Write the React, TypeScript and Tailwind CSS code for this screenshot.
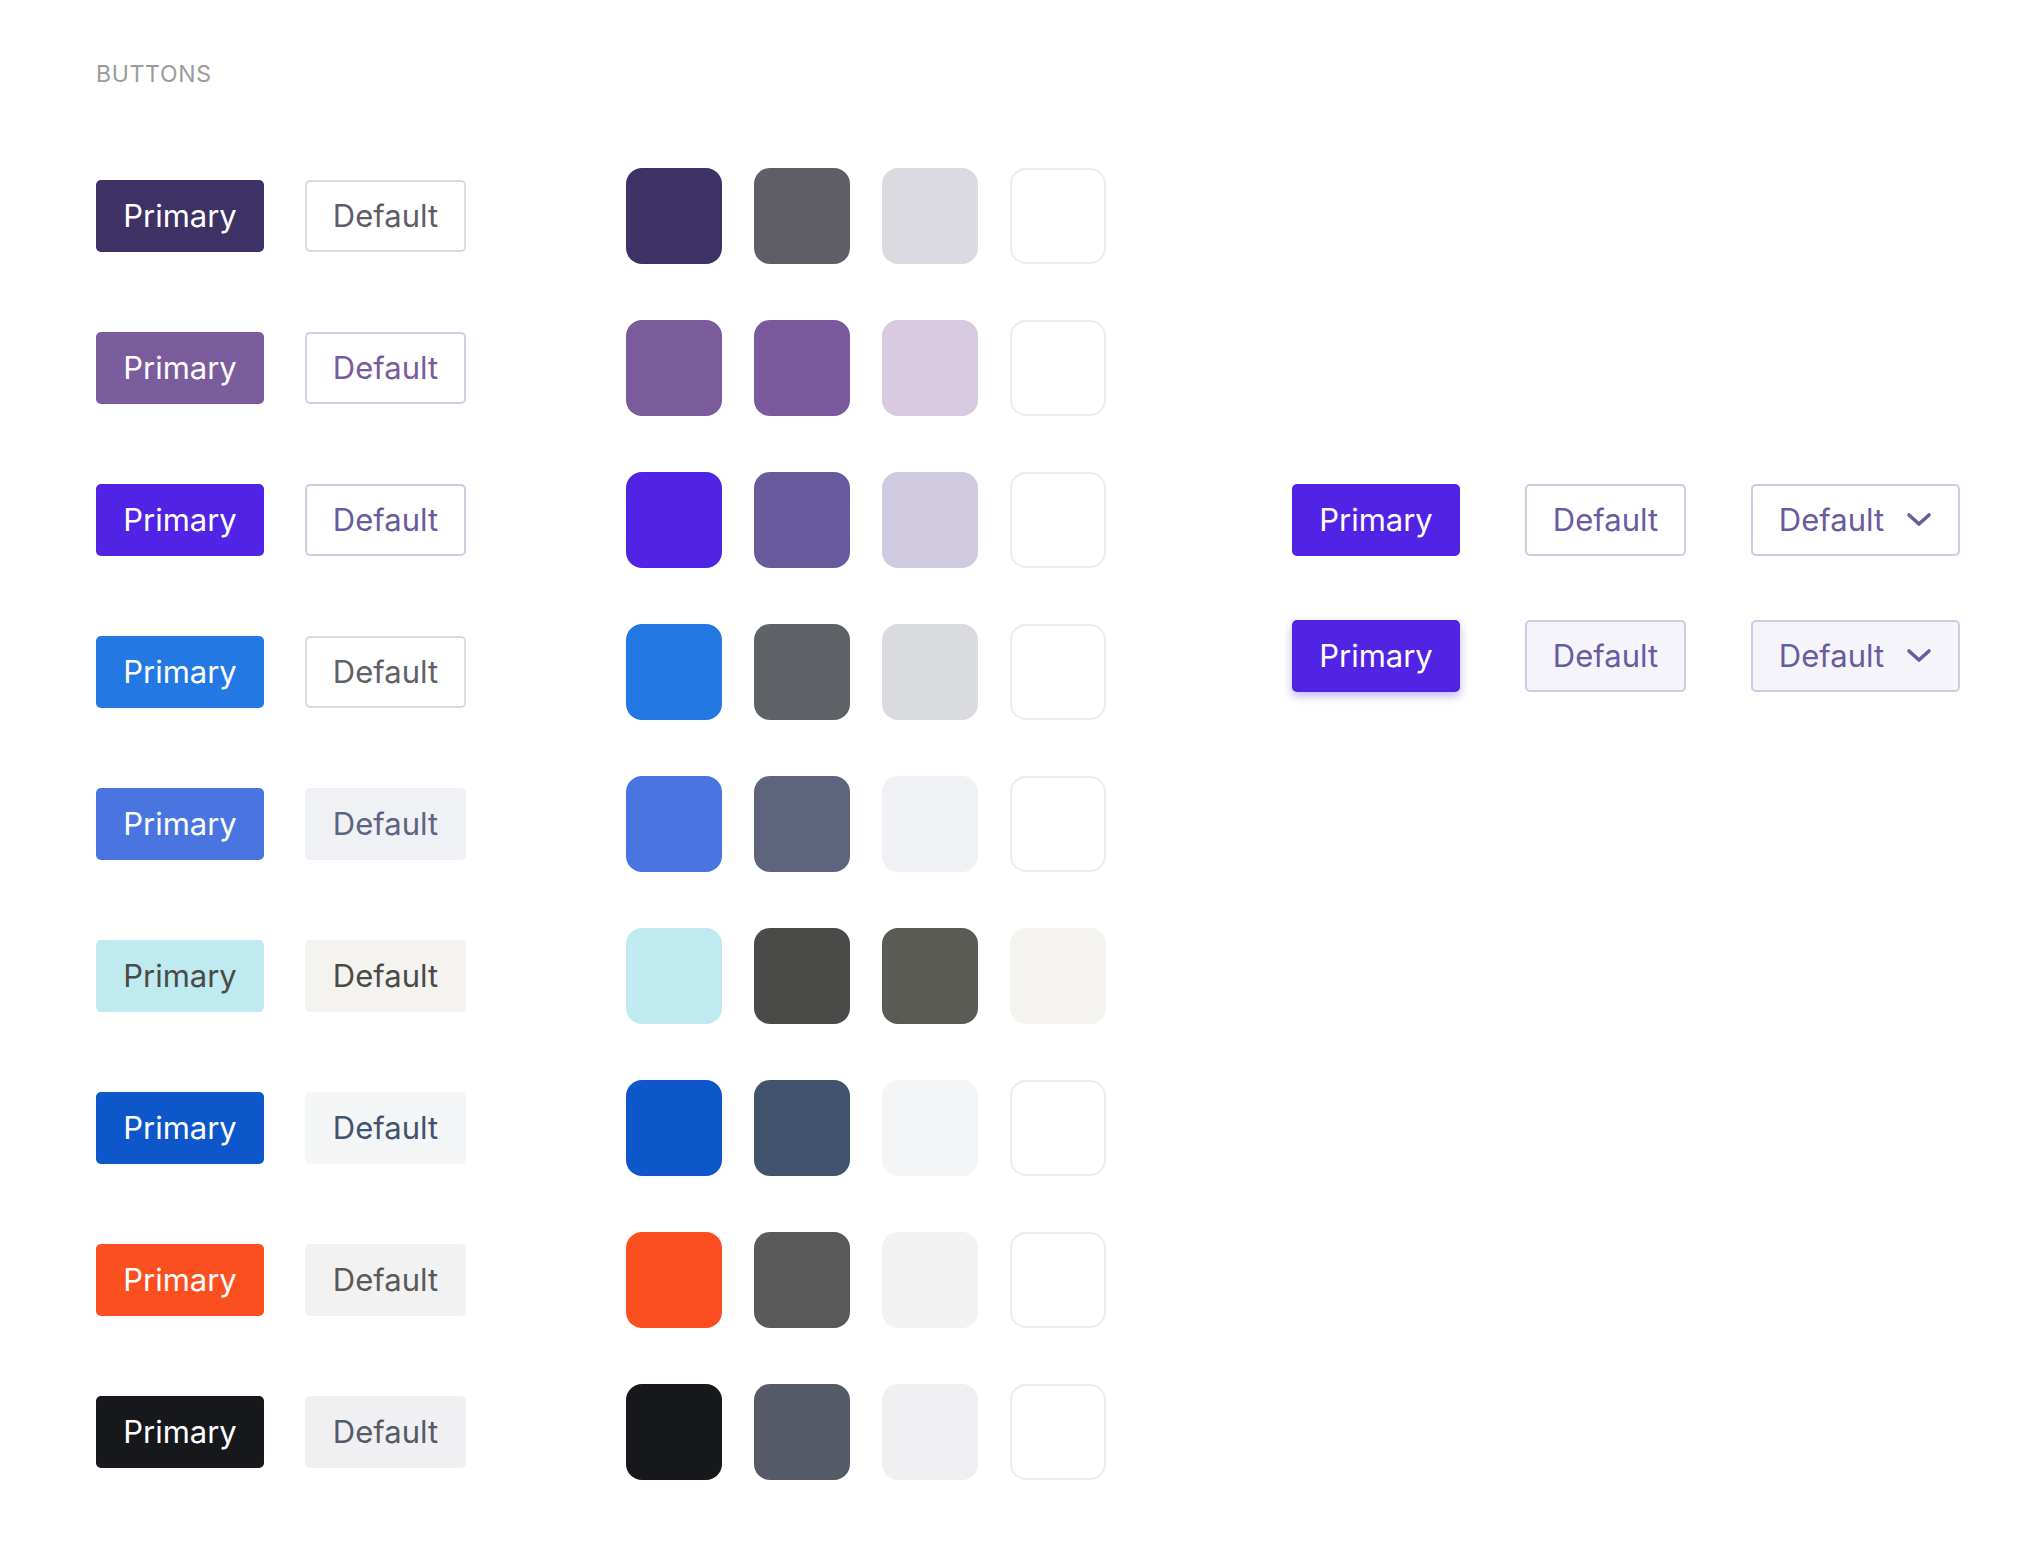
import React from 'react';

type Row = {
  primary: string;
  primaryText: string;
  defaultBtn: string;
  swatches: string[];
};

// each palette row: primary button, default button, four swatches
const rows: Row[] = [
  {
    primary: 'bg-[#3e3166]',
    primaryText: 'text-white',
    defaultBtn: 'bg-white border-2 border-[#dcdae0] text-[#5f5d66]',
    swatches: ['bg-[#3e3166]', 'bg-[#5f5d66]', 'bg-[#dbdae0]', 'bg-white border-2 border-[#ececec]'],
  },
  {
    primary: 'bg-[#7a5b9b]',
    primaryText: 'text-white',
    defaultBtn: 'bg-white border-2 border-[#d8cce2] text-[#7a5a9c]',
    swatches: ['bg-[#7a5b9b]', 'bg-[#7a5a9c]', 'bg-[#d8cae0]', 'bg-white border-2 border-[#ececec]'],
  },
  {
    primary: 'bg-[#5124e5]',
    primaryText: 'text-white',
    defaultBtn: 'bg-white border-2 border-[#d0cbe2] text-[#6a5a9e]',
    swatches: ['bg-[#5124e5]', 'bg-[#695a9e]', 'bg-[#d0cae1]', 'bg-white border-2 border-[#ececec]'],
  },
  {
    primary: 'bg-[#2378e4]',
    primaryText: 'text-white',
    defaultBtn: 'bg-white border-2 border-[#dadbe0] text-[#5e6166]',
    swatches: ['bg-[#2378e4]', 'bg-[#5e6166]', 'bg-[#dadbdf]', 'bg-white border-2 border-[#ececec]'],
  },
  {
    primary: 'bg-[#4a75e0]',
    primaryText: 'text-white',
    defaultBtn: 'bg-[#f0f1f5] text-[#5d6480]',
    swatches: ['bg-[#4a75e0]', 'bg-[#5f647e]', 'bg-[#f0f1f5]', 'bg-white border-2 border-[#ececec]'],
  },
  {
    primary: 'bg-[#bfeaef]',
    primaryText: 'text-[#4a4a48]',
    defaultBtn: 'bg-[#f4f3f0] text-[#4a4a48]',
    swatches: ['bg-[#bfeaef]', 'bg-[#4a4a48]', 'bg-[#5a5b55]', 'bg-[#f4f3f0]'],
  },
  {
    primary: 'bg-[#0e57cb]',
    primaryText: 'text-white',
    defaultBtn: 'bg-[#f4f5f7] text-[#42536d]',
    swatches: ['bg-[#0e57cb]', 'bg-[#42536d]', 'bg-[#f4f5f7]', 'bg-white border-2 border-[#ececec]'],
  },
  {
    primary: 'bg-[#fb4f20]',
    primaryText: 'text-white',
    defaultBtn: 'bg-[#f2f2f2] text-[#595959]',
    swatches: ['bg-[#fb4f20]', 'bg-[#595959]', 'bg-[#f2f2f2]', 'bg-white border-2 border-[#ececec]'],
  },
  {
    primary: 'bg-[#17181c]',
    primaryText: 'text-white',
    defaultBtn: 'bg-[#f0f0f2] text-[#555a66]',
    swatches: ['bg-[#17181c]', 'bg-[#565a66]', 'bg-[#f0f0f2]', 'bg-white border-2 border-[#ececec]'],
  },
];

function Chevron() {
  return (
    <svg width="26" height="15" viewBox="0 0 26 15" fill="none" className="ml-[22px]">
      <polyline
        points="3,3 13,12 23,3"
        stroke="currentColor"
        strokeWidth="3.6"
        strokeLinecap="round"
        strokeLinejoin="round"
      />
    </svg>
  );
}

export default function App() {
  return (
    <div className="min-h-screen bg-white pl-[96px] pt-[60px] font-['Inter','Liberation_Sans',sans-serif] text-[31px]">
      <div className="text-[23px] leading-[28px] text-[#9b9b9b] tracking-[0.03em]">BUTTONS</div>

      <div className="flex items-start mt-[80px]">
        {/* Palette rows */}
        <div className="flex flex-col gap-[56px]">
          {rows.map((row, i) => (
            <div key={i} className="flex items-center h-[96px]">
              <button
                className={`w-[168px] h-[72px] pb-[2px] rounded-[5px] flex items-center justify-center leading-none ${row.primary} ${row.primaryText}`}
              >
                Primary
              </button>
              <button
                className={`ml-[41px] w-[161px] h-[72px] pb-[2px] rounded-[5px] flex items-center justify-center leading-none ${row.defaultBtn}`}
              >
                Default
              </button>
              <div className="ml-[160px] flex gap-[32px]">
                {row.swatches.map((s, j) => (
                  <div key={j} className={`w-[96px] h-[96px] rounded-[16px] ${s}`} />
                ))}
              </div>
            </div>
          ))}
        </div>

        {/* States */}
        <div className="ml-[186px] mt-[316px] flex flex-col gap-[64px]">
          <div className="flex items-center">
            <button className="w-[168px] h-[72px] pb-[2px] rounded-[5px] bg-[#5124e5] text-white flex items-center justify-center leading-none">
              Primary
            </button>
            <button className="ml-[65px] w-[161px] h-[72px] pb-[2px] rounded-[5px] bg-white border-2 border-[#d0cbe2] text-[#6a5a9e] flex items-center justify-center leading-none">
              Default
            </button>
            <button className="ml-[65px] w-[209px] h-[72px] pb-[2px] rounded-[5px] bg-white border-2 border-[#d0cbe2] text-[#6a5a9e] flex items-center justify-center leading-none">
              Default
              <Chevron />
            </button>
          </div>
          <div className="flex items-center">
            <button className="w-[168px] h-[72px] pb-[2px] rounded-[5px] bg-[#5124e5] text-white flex items-center justify-center leading-none shadow-[0_4px_10px_rgba(81,36,229,0.35)]">
              Primary
            </button>
            <button className="ml-[65px] w-[161px] h-[72px] pb-[2px] rounded-[5px] bg-[#f5f4fa] border-2 border-[#d0cbe2] text-[#6a5a9e] flex items-center justify-center leading-none">
              Default
            </button>
            <button className="ml-[65px] w-[209px] h-[72px] pb-[2px] rounded-[5px] bg-[#f5f4fa] border-2 border-[#d0cbe2] text-[#6a5a9e] flex items-center justify-center leading-none">
              Default
              <Chevron />
            </button>
          </div>
        </div>
      </div>
    </div>
  );
}
